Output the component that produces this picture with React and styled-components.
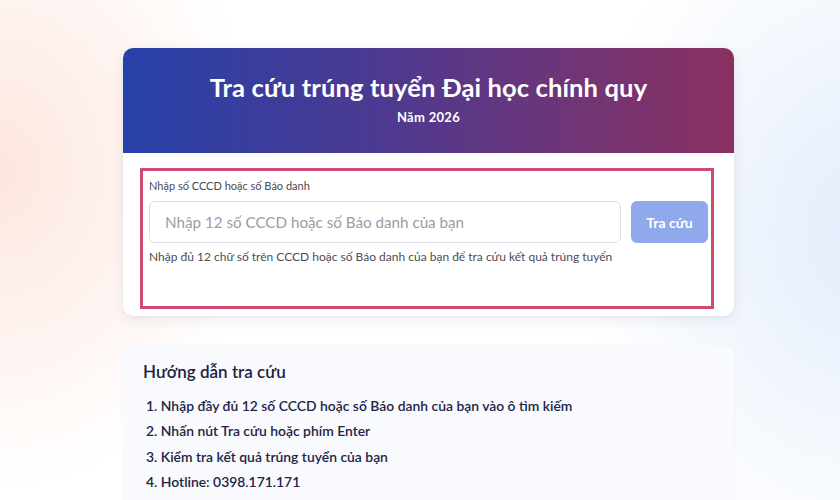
import React from "react";
import styled, { createGlobalStyle } from "styled-components";

const Global = createGlobalStyle`
  html, body { margin: 0; padding: 0; }
  body {
    font-family: "Lato", "Noto Sans", sans-serif;
    background:
      radial-gradient(ellipse 260px 320px at 0px 170px, rgba(252, 222, 212, 0.75), rgba(252, 222, 212, 0) 100%),
      radial-gradient(ellipse 280px 360px at 860px 230px, rgba(220, 232, 250, 0.8), rgba(220, 232, 250, 0) 100%),
      #ffffff;
    min-height: 500px;
    overflow: hidden;
  }
`;

const Page = styled.div`
  display: flex;
  flex-direction: column;
  gap: 29px;
  padding: 48px 0 0 123px;
  width: 611px;
`;

const Card = styled.section`
  background: #fff;
  border-radius: 10px;
  box-shadow: 0 4px 14px rgba(30, 40, 80, 0.08), 0 1px 3px rgba(30, 40, 80, 0.05);
  overflow: hidden;
`;

const Header = styled.header`
  height: 105px;
  box-sizing: border-box;
  padding-top: 23px;
  background: linear-gradient(90deg, #2641a8 0%, #4a3a92 40%, #6e3578 72%, #8a3060 100%);
  color: #fff;
  text-align: center;
`;

const Title = styled.h1`
  margin: 0;
  font-size: 25.6px;
  font-weight: 700;
  line-height: 32px;
  letter-spacing: 0.1px;
`;

const Subtitle = styled.div`
  margin-top: 6px;
  font-size: 13px;
  font-weight: 700;
  line-height: 16px;
  letter-spacing: 0.3px;
`;

const Body = styled.div`
  padding: 15px 20px 7px 17px;
`;

const Highlight = styled.div`
  border: 3px solid #cf4b70;
  height: 141px;
  box-sizing: border-box;
  padding: 8px 3px 0 6px;
`;

const Label = styled.div`
  font-size: 11px;
  color: #4a4a55;
  line-height: 14px;
`;

const Row = styled.div`
  display: flex;
  gap: 10px;
  margin-top: 8px;
`;

const Input = styled.input`
  flex: 1;
  height: 42px;
  box-sizing: border-box;
  border: 1px solid #dcdde3;
  border-radius: 6px;
  padding: 0 15px;
  font-family: inherit;
  font-size: 15.2px;
  color: #333;
  outline: none;
  &::placeholder { color: #9a9ca6; }
`;

const Button = styled.button`
  width: 77px;
  height: 42px;
  border: none;
  border-radius: 6px;
  background: #90a8ec;
  color: #fff;
  font-family: inherit;
  font-size: 14px;
  font-weight: 700;
`;

const Help = styled.div`
  margin-top: 7px;
  font-size: 12px;
  line-height: 14px;
  color: #4d4d58;
`;

const GuideCard = styled.section`
  background: #f8fafd;
  border-radius: 10px;
  padding: 16px 20px 20px;
  box-shadow: 0 1px 4px rgba(30, 40, 80, 0.03);
`;

const GuideTitle = styled.h2`
  margin: 0;
  font-size: 17px;
  font-weight: 600;
  line-height: 22px;
  color: #1d2240;
`;

const List = styled.ol`
  margin: 10px 0 0;
  padding: 0 0 0 3px;
  list-style: none;
  counter-reset: step;
`;

const Item = styled.li`
  counter-increment: step;
  font-size: 13.9px;
  font-weight: 600;
  line-height: 25.4px;
  color: #1f2445;
  &::before { content: counter(step) ". "; }
`;

const steps = [
  "Nhập đầy đủ 12 số CCCD hoặc số Báo danh của bạn vào ô tìm kiếm",
  "Nhấn nút Tra cứu hoặc phím Enter",
  "Kiểm tra kết quả trúng tuyển của bạn",
  "Hotline: 0398.171.171",
];

export default function App() {
  return (
    <>
      <Global />
      <Page>
        <Card>
          <Header>
            <Title>Tra cứu trúng tuyển Đại học chính quy</Title>
            <Subtitle>Năm 2026</Subtitle>
          </Header>
          <Body>
            <Highlight>
              <Label>Nhập số CCCD hoặc số Báo danh</Label>
              <Row>
                <Input placeholder="Nhập 12 số CCCD hoặc số Báo danh của bạn" />
                <Button>Tra cứu</Button>
              </Row>
              <Help>Nhập đủ 12 chữ số trên CCCD hoặc số Báo danh của bạn để tra cứu kết quả trúng tuyển</Help>
            </Highlight>
          </Body>
        </Card>
        <GuideCard>
          <GuideTitle>Hướng dẫn tra cứu</GuideTitle>
          <List>
            {steps.map((s) => (
              <Item key={s}>{s}</Item>
            ))}
          </List>
        </GuideCard>
      </Page>
    </>
  );
}
